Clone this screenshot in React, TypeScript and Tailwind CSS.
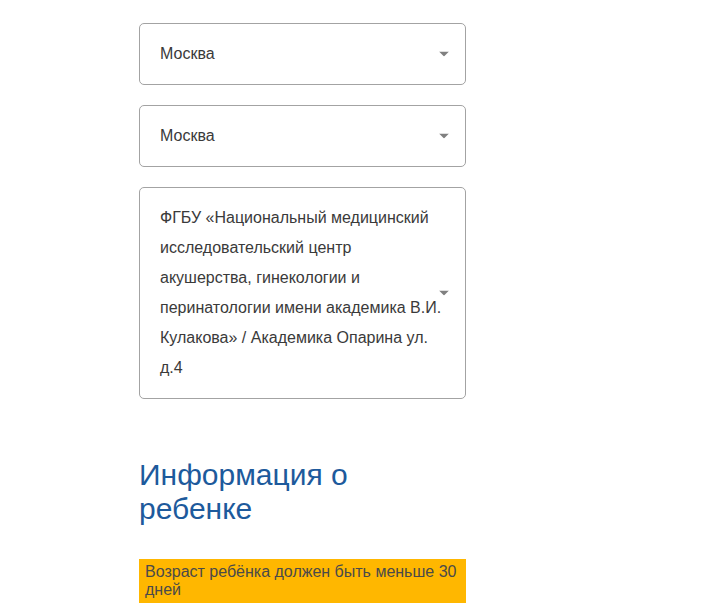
import React from "react";

function Arrow() {
  return (
    <svg
      width="10"
      height="5"
      viewBox="0 0 10 5"
      className="absolute right-[16px] top-1/2 -translate-y-1/2"
    >
      <path d="M0 0 L10 0 L5 5 Z" fill="#808080" />
    </svg>
  );
}

function SelectBox({ children, multi }: { children: React.ReactNode; multi?: boolean }) {
  return (
    <div
      className={
        "relative flex items-center rounded-[5px] border border-[#a3a3a3] bg-white pl-[20px] pr-[20px] " +
        (multi ? "py-[15px]" : "h-[62px]")
      }
    >
      <div
        className={
          "text-[16px] text-[#3a3a3a] " + (multi ? "leading-[30px]" : "leading-[20px]")
        }
      >
        {children}
      </div>
      <Arrow />
    </div>
  );
}

export default function App() {
  return (
    <div
      className="min-h-[605px] bg-white pl-[139px] pt-[23px]"
      style={{ fontFamily: '"Liberation Sans", Arial, sans-serif' }}
    >
      <div className="flex w-[327px] flex-col">
        <div className="flex flex-col gap-[20px]">
          <SelectBox>Москва</SelectBox>
          <SelectBox>Москва</SelectBox>
          <SelectBox multi>
            ФГБУ «Национальный медицинский исследовательский центр акушерства, гинекологии и
            перинатологии имени академика В.И. Кулакова» / Академика Опарина ул. д.4
          </SelectBox>
        </div>
        <h2 className="mt-[59px] w-[260px] text-[30px] font-normal leading-[34px] text-[#1d5a9c]">
          Информация о ребенке
        </h2>
        <div className="mt-[33px] bg-[#ffb700] px-[6px] py-[4px] text-[16px] leading-[18px] text-[#4a4a4a]">
          Возраст ребёнка должен быть меньше 30 дней
        </div>
      </div>
    </div>
  );
}
